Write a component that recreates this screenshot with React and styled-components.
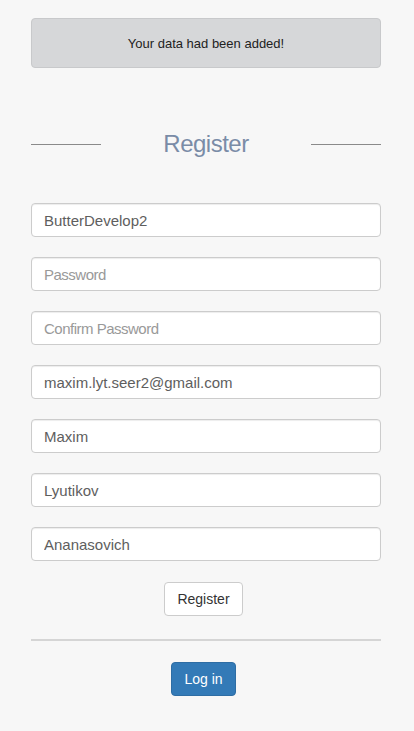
import React from 'react';
import styled, { createGlobalStyle } from 'styled-components';

const GlobalStyle = createGlobalStyle`
  html, body {
    margin: 0;
    padding: 0;
    background: #f7f7f7;
    font-family: 'Liberation Sans', Arial, sans-serif;
  }
`;

const Page = styled.div`
  padding: 18px 33px 30px 31px;
  min-height: 100vh;
  box-sizing: border-box;
`;

const Alert = styled.div`
  height: 50px;
  box-sizing: border-box;
  background: #d6d7d9;
  border: 1px solid #c8c9cb;
  border-radius: 4px;
  display: flex;
  align-items: center;
  justify-content: center;
  font-size: 13px;
  color: #222;
`;

const Heading = styled.div`
  display: flex;
  align-items: center;
  height: 34px;
  margin: 59px 0 42px;
`;

const Line = styled.span`
  width: 70px;
  height: 1px;
  background: #8a8a8a;
`;

const Title = styled.h2`
  flex: 1;
  margin: 0;
  text-align: center;
  font-size: 24px;
  font-weight: normal;
  letter-spacing: -0.5px;
  color: #7a8ca7;
`;

const Form = styled.form`
  display: flex;
  flex-direction: column;
  gap: 20px;
`;

const Input = styled.input`
  height: 34px;
  box-sizing: border-box;
  padding: 6px 12px;
  font-family: inherit;
  font-size: 15px;
  line-height: 20px;
  color: #5e5e5e;
  background: #fff;
  border: 1px solid #ccc;
  border-radius: 4px;
  box-shadow: inset 0 1px 1px rgba(0, 0, 0, 0.075);
  outline: none;

  &::placeholder {
    letter-spacing: -0.5px;
    color: #999;
  }
`;

const Actions = styled.div`
  display: flex;
  justify-content: center;
  padding-right: 5px;
  margin-top: 1px;
`;

const Button = styled.button`
  height: 34px;
  padding: 6px 12px;
  font-family: inherit;
  font-size: 14px;
  line-height: 20px;
  border-radius: 4px;
  border: 1px solid ${(p) => (p.$primary ? '#2e6da4' : '#ccc')};
  background: ${(p) => (p.$primary ? '#337ab7' : '#fff')};
  color: ${(p) => (p.$primary ? '#fff' : '#333')};
  cursor: pointer;
`;

const Divider = styled.hr`
  margin: 23px 0 21px;
  border: 0;
  border-top: 2px solid #d5d5d5;
`;

const fields = [
  { type: 'text', value: 'ButterDevelop2', placeholder: 'Login' },
  { type: 'password', value: '', placeholder: 'Password' },
  { type: 'password', value: '', placeholder: 'Confirm Password' },
  { type: 'email', value: 'maxim.lyt.seer2@gmail.com', placeholder: 'Email' },
  { type: 'text', value: 'Maxim', placeholder: 'First name' },
  { type: 'text', value: 'Lyutikov', placeholder: 'Last name' },
  { type: 'text', value: 'Ananasovich', placeholder: 'Patronymic' },
];

const App = () => {
  return (
    <>
      <GlobalStyle />
      <Page>
        <Alert>Your data had been added!</Alert>
        <Heading>
          <Line />
          <Title>Register</Title>
          <Line />
        </Heading>
        <Form onSubmit={(e) => e.preventDefault()}>
          {fields.map((f, i) => (
            <Input key={i} type={f.type} defaultValue={f.value} placeholder={f.placeholder} />
          ))}
          <Actions>
            <Button type="submit">Register</Button>
          </Actions>
        </Form>
        <Divider />
        <Actions>
          <Button $primary>Log in</Button>
        </Actions>
      </Page>
    </>
  );
};

export default App;
